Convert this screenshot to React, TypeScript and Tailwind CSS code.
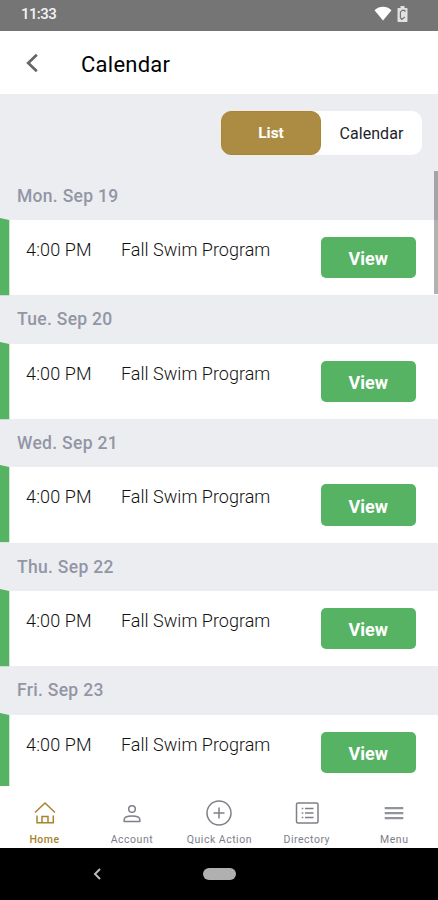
import React from "react";

const days = ["Mon. Sep 19", "Tue. Sep 20", "Wed. Sep 21", "Thu. Sep 22", "Fri. Sep 23"];

function StatusBar() {
  return (
    <div className="flex h-[31px] shrink-0 items-start bg-[#757575] pl-[21px] pr-[30px] text-white">
      <span className="mt-[4px] text-[15px] font-medium leading-[21px] tracking-[-0.6px] text-[#f4f4f4]">11:33</span>
      <svg className="ml-auto mt-[6px]" width="18" height="15" viewBox="0 0 18 15" fill="#fff">
        <path d="M0.5 4.2C5.4-.4 12.6-.4 17.5 4.2L9 14.6Z" />
      </svg>
      <svg className="ml-[5px] mt-[6px]" width="11" height="16" viewBox="0 0 11 16" fill="none">
        <path d="M3.5 0h4v2h2.2q.8 0 .8.8v12.4q0 .8-.8.8H1.3q-.8 0-.8-.8V2.800q0-.8.8-.8h2.200z" fill="#e2e2e2" />
        <path d="M7.800 6V4.300H5.200L3.400 6.200v5.600l1.400 1.700L7.800 11" stroke="#757575" strokeWidth="1.200" />
      </svg>
    </div>
  );
}

function DaySection({ label }: { label: string }) {
  return (
    <section className="h-[123.700px] shrink-0">
      <h2 className="flex h-[48.400px] items-center pl-[17px] text-[17.500px] font-medium tracking-[0.300px] text-[#9296a5]">
        {label}
      </h2>
      <div className="relative flex h-[75.300px] items-start bg-white">
        <svg className="absolute -top-[2px] left-0" width="10" height="78" viewBox="0 0 10 78">
          <path d="M0 0L9.300 2V77.300H0Z" fill="#55b363" />
        </svg>
        <span className="ml-[26px] mt-[17px] w-[95px] text-[18px] font-light leading-[26px] tracking-[0.150px] text-[#111]">4:00 PM</span>
        <span className="mt-[17px] text-[18px] font-light leading-[26px] tracking-[0.020px] text-[#111]">Fall Swim Program</span>
        <button className="ml-auto mr-[22.500px] mt-[17px] h-[41.500px] w-[94.500px] rounded-[5px] bg-[#55b363] pt-[2px] text-[18px] font-bold text-white">
          View
        </button>
      </div>
    </section>
  );
}

function NavItem({ label, active, children }: { label: string; active?: boolean; children: React.ReactNode }) {
  return (
    <div className={`flex w-[87.600px] flex-col items-center ${active ? "text-[#a9822d]" : "text-[#7d8088]"}`}>
      <svg className="mt-[13px]" width="28" height="28" viewBox="0 0 28 28" fill="none" stroke="currentColor" strokeWidth="1.500">
        {children}
      </svg>
      <span className={`mt-[6px] whitespace-nowrap text-[10.500px] leading-[14px] tracking-[0.500px] ${active ? "font-medium" : ""}`}>{label}</span>
    </div>
  );
}

export default function App() {
  return (
    <div className="flex h-[900px] w-[438px] flex-col overflow-hidden bg-white font-[Roboto,sans-serif]">
      <StatusBar />
      <header className="flex h-[63px] shrink-0 items-center bg-white pl-[25px]">
        <svg width="14" height="20" viewBox="0 0 14 20" fill="none" stroke="#666" strokeWidth="2.700">
          <path d="M11.800 1.800L3.200 10l8.600 8.200" />
        </svg>
        <h1 className="ml-[42px] mt-[3px] text-[22px] font-normal tracking-[0.250px] text-black">Calendar</h1>
      </header>
      <main className="relative flex h-[691.500px] shrink-0 flex-col overflow-hidden bg-[#ecedf1]">
        <div className="flex h-[77.500px] shrink-0 justify-end pr-[16px] pt-[17px]">
          <div className="flex h-[43.500px] w-[201px] rounded-[10px] bg-white text-[16px]">
            <button className="w-[100px] rounded-[10px] border border-[#aa862f] bg-[#ab8c42] pt-[2px] text-[15.500px] font-bold text-white">List</button>
            <button className="flex-1 pt-[2px] font-normal tracking-[0.050px] text-[#1e1e2a]">Calendar</button>
          </div>
        </div>
        {days.map((d) => (
          <DaySection key={d} label={d} />
        ))}
        <div className="absolute right-0 top-[77px] h-[123px] w-[4.500px] bg-black/30" />
      </main>
      <nav className="flex h-[62px] shrink-0 bg-white pl-[0.800px]">
        <NavItem label="Home" active>
          <path d="M4 13.500L14 4l10 9.500M6 16.500v7.300h16.300v-7.300M11 23.800V17.500h6v6.300" />
        </NavItem>
        <NavItem label="Account">
          <circle cx="14" cy="10" r="3.300" />
          <path d="M6.200 22.500V20.500q0-3.500 7.800-3.500t7.800 3.500v2z" />
        </NavItem>
        <NavItem label="Quick Action">
          <circle cx="14" cy="14" r="12" />
          <path d="M14 8.500v11M8.500 14h11" />
        </NavItem>
        <NavItem label="Directory">
          <rect x="3.500" y="4" width="21.500" height="20" rx="1.500" />
          <path d="M8.700 9.500h1.600M12 9.500h8.500M8.700 14h1.600M12 14h8.500M8.700 18.500h1.600M12 18.500h8.500" />
        </NavItem>
        <NavItem label="Menu">
          <path d="M4.700 9.200h18.600M4.700 14.200h18.600M4.700 19.200h18.600" stroke="#92949b" strokeWidth="2.200" />
        </NavItem>
      </nav>
      <div className="flex flex-1 items-center bg-black pl-[92px]">
        <svg width="10" height="12" viewBox="0 0 10 12" fill="none" stroke="#bbb" strokeWidth="2">
          <path d="M8 1L3 6l5 5" />
        </svg>
        <div className="ml-[101px] h-[12px] w-[33px] rounded-full bg-[#b0b0b0]" />
      </div>
    </div>
  );
}
